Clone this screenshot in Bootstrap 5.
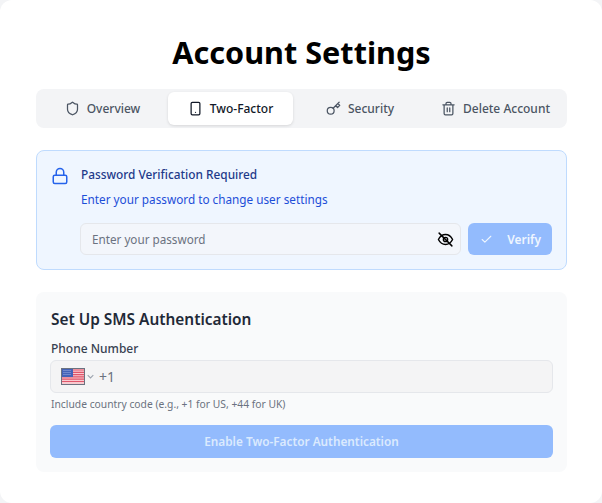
<!DOCTYPE html>
<html lang="en">
<head>
<meta charset="utf-8">
<title>Account Settings</title>
<link href="https://cdn.jsdelivr.net/npm/bootstrap@5.3.0/dist/css/bootstrap.min.css" rel="stylesheet">
<style>
html,body{height:503px;overflow:hidden}
body{background:#f3f4f6;font-family:"Noto Sans",sans-serif;color:#1f2937}
.shell{height:503px;background:#fff;border-radius:12px;padding:0 35px 0 36px}
.page-title{font-size:30.6px;font-weight:700;line-height:36px;color:#000;text-align:center;margin:0;padding-top:34px;height:89px}
.tabbar{display:grid;grid-template-columns:127fr 125fr 130fr 137fr;gap:2px;height:39px;padding:3px;background:#f3f4f6;border-radius:8px}
.tab-item{display:flex;align-items:center;justify-content:center;gap:7px;font-size:12px;font-weight:500;color:#4b5563;border-radius:6px;white-space:nowrap}
.tab-item span{padding-top:1px}
.tab-item svg{width:15px;height:15px;flex:none}
.tab-on{background:#fff;color:#111827;box-shadow:0 1px 3px rgba(0,0,0,.12)}
.verify-box{margin-top:22px;height:120px;background:#eff6ff;border:1px solid #bfdbfe;border-radius:8px;padding:15px 14px 14px 14px;display:flex;gap:11px}
.verify-box>svg{width:18px;height:18px;flex:none;margin-top:1px;color:#2563eb}
.verify-title{font-size:11.85px;font-weight:500;line-height:16px;color:#1e3a8a;padding-left:1px}
.verify-text{font-size:11.75px;line-height:16px;color:#1d4ed8;margin-top:9px;padding-left:1px}
.verify-row{margin-top:16px;gap:7px}
.pw-wrap{flex:1;height:32px;background:#f3f6fb;border:1px solid #e5e7eb;border-radius:6px;padding:0 6px 0 11px}
.pw-text{font-size:11.7px;color:#6b7280;padding-top:1px}
.pw-wrap svg{width:17px;height:17px;color:#000}
.verify-btn{width:84px;height:32px;background:#93bbfd;border-radius:6px;color:#eff6ff;font-size:11.9px;font-weight:600;padding:0 11px 0 12px}
.verify-btn span{padding-top:1px}
.verify-btn svg{width:13px;height:13px}
.sms-box{margin-top:22px;height:180px;background:#f9fafb;border-radius:8px;padding:18px 14px 14px}
.sms-title{font-size:15.4px;font-weight:600;line-height:20px;color:#1f2937;margin:0;padding-left:1px}
.phone-label{font-size:12px;font-weight:500;line-height:16px;color:#374151;margin-top:11px;padding-left:1px}
.phone-field{height:33px;margin-top:3px;background:#f4f4f5;border:1px solid #e5e7eb;border-radius:6px;padding:0 11px 0 10px;font-size:14px;color:#6b7280}
.flag{width:24px;height:17px;flex:none;display:block}
.caret{width:7px;height:7px;margin:0 5px 0 2px;color:#9ca3af}
.help-line{font-size:10.3px;line-height:14px;color:#6b7280;margin-top:4px;padding-left:1px}
.enable-btn{height:33px;margin-top:14px;background:#93bbfd;border-radius:6px;color:#dbeafe;font-size:11.8px;font-weight:600}
</style>
</head>
<body>
<div class="shell">
  <h1 class="page-title">Account Settings</h1>
  <div class="tabbar">
    <div class="tab-item"><svg viewBox="0 0 24 24" fill="none" stroke="currentColor" stroke-width="2" stroke-linecap="round" stroke-linejoin="round"><path d="M20 13c0 5-3.500 7.500-7.660 8.950a1 1 0 0 1-.670-.010C7.500 20.500 4 18 4 13V6a1 1 0 0 1 1-1c2 0 4.500-1.200 6.240-2.720a1.170 1.170 0 0 1 1.520 0C14.510 3.810 17 5 19 5a1 1 0 0 1 1 1z"/></svg><span>Overview</span></div>
    <div class="tab-item tab-on"><svg viewBox="0 0 24 24" fill="none" stroke="currentColor" stroke-width="2" stroke-linecap="round" stroke-linejoin="round"><rect x="5" y="2" width="14" height="20" rx="2"/><path d="M12 18h.01"/></svg><span>Two-Factor</span></div>
    <div class="tab-item"><svg viewBox="0 0 24 24" fill="none" stroke="currentColor" stroke-width="2" stroke-linecap="round" stroke-linejoin="round"><circle cx="7.500" cy="15.500" r="5.500"/><path d="m21 2-9.600 9.600M15.500 7.500l3 3L22 7l-3-3"/></svg><span>Security</span></div>
    <div class="tab-item"><svg viewBox="0 0 24 24" fill="none" stroke="currentColor" stroke-width="2" stroke-linecap="round" stroke-linejoin="round"><path d="M3 6h18M19 6v14a2 2 0 0 1-2 2H7a2 2 0 0 1-2-2V6M8 6V4a2 2 0 0 1 2-2h4a2 2 0 0 1 2 2v2M10 11v6M14 11v6"/></svg><span>Delete Account</span></div>
  </div>

  <div class="verify-box">
    <svg viewBox="0 0 24 24" fill="none" stroke="currentColor" stroke-width="2" stroke-linecap="round" stroke-linejoin="round"><rect x="3" y="11" width="18" height="11" rx="2"/><path d="M7 11V7a5 5 0 0 1 10 0v4"/></svg>
    <div class="flex-grow-1">
      <div class="verify-title">Password Verification Required</div>
      <div class="verify-text">Enter your password to change user settings</div>
      <div class="d-flex verify-row">
        <div class="pw-wrap d-flex align-items-center justify-content-between">
          <span class="pw-text">Enter your password</span>
          <svg viewBox="0 0 24 24" fill="none" stroke="currentColor" stroke-width="2" stroke-linecap="round" stroke-linejoin="round"><path d="M2 12s3.600-7 10-7 10 7 10 7-3.600 7-10 7-10-7-10-7z"/><circle cx="12" cy="12" r="3"/><path d="m3 3 18 18"/></svg>
        </div>
        <div class="verify-btn d-flex align-items-center justify-content-between">
          <svg viewBox="0 0 24 24" fill="none" stroke="currentColor" stroke-width="2" stroke-linecap="round" stroke-linejoin="round"><path d="M20 6 9 17l-5-5"/></svg>
          <span>Verify</span>
        </div>
      </div>
    </div>
  </div>

  <div class="sms-box">
    <h2 class="sms-title">Set Up SMS Authentication</h2>
    <div class="phone-label">Phone Number</div>
    <div class="phone-field d-flex align-items-center">
      <svg class="flag" viewBox="0 0 24 17">
        <rect width="24" height="17" fill="#6b7280"/>
        <rect x="1" y="1" width="22" height="15" fill="#f8c9cf"/>
        <path d="M1 2h22M1 4.300h22M1 6.600h22M1 8.900h22M1 11.200h22M1 13.500h22" stroke="#e0566b" stroke-width="1.200"/>
        <rect x="1" y="1" width="11" height="8" fill="#4462b8"/>
        <path d="M2.500 2.500h8M2.500 4.500h8M2.500 6.500h8" stroke="#c7d2f0" stroke-width=".7" stroke-dasharray="1 1"/>
      </svg>
      <svg class="caret" viewBox="0 0 10 10" fill="none" stroke="currentColor" stroke-width="1.500"><path d="m1 3 4 4 4-4"/></svg>
      <span>+1</span>
    </div>
    <div class="help-line">Include country code (e.g., +1 for US, +44 for UK)</div>
    <div class="enable-btn d-flex align-items-center justify-content-center">Enable Two-Factor Authentication</div>
  </div>
</div>
<script src="https://cdn.jsdelivr.net/npm/bootstrap@5.3.0/dist/js/bootstrap.bundle.min.js"></script>
</body>
</html>
